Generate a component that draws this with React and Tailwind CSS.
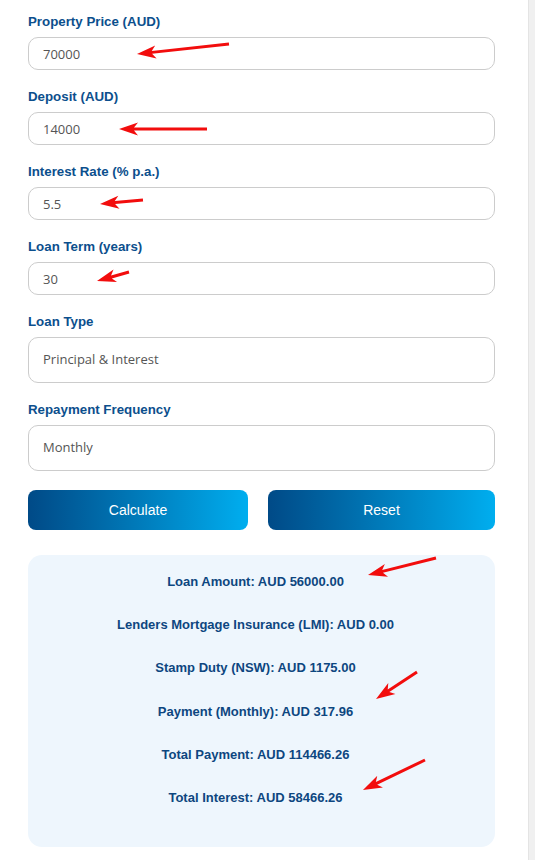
import React, { useState } from 'react';

// ─── Annotation arrows (red markers on top of the form) ─────────────────────

const ARROWS = [
  { from: [229, 44], to: [137, 54] },
  { from: [207, 129], to: [119, 129] },
  { from: [143, 200], to: [100, 204] },
  { from: [129, 272], to: [97, 281] },
  { from: [436, 558], to: [368, 575] },
  { from: [417, 672], to: [376, 699] },
  { from: [425, 760], to: [363, 790] },
];

function Arrow({ from, to }) {
  const [x1, y1] = from;
  const [x2, y2] = to;
  const len = Math.hypot(x2 - x1, y2 - y1);
  const ux = (x2 - x1) / len, uy = (y2 - y1) / len;
  const nx = -uy, ny = ux;
  const head = 19, hw = 6.5;
  const bx = x2 - ux * head, by = y2 - uy * head;
  const pts = [
    [x2, y2],
    [bx + nx * hw, by + ny * hw],
    [bx + ux * 4 + nx * 1.5, by + uy * 4 + ny * 1.5],
    [x1 + nx * 1.5, y1 + ny * 1.5],
    [x1 - nx * 1.5, y1 - ny * 1.5],
    [bx + ux * 4 - nx * 1.5, by + uy * 4 - ny * 1.5],
    [bx - nx * hw, by - ny * hw],
  ].map(p => p.join(',')).join(' ');
  return <polygon points={pts} fill="#f20d0d" />;
}

// ─── Form pieces ─────────────────────────────────────────────────────────────

function Field({ label, children }) {
  return (
    <div className="flex flex-col">
      <label className="text-[13.3px] leading-[18px] font-bold text-[#0c4f8d] mb-[6px]">{label}</label>
      {children}
    </div>
  );
}

const inputCls = 'w-full border border-[#cccccc] rounded-[10px] bg-white px-[14px] text-[13px] text-[#555] font-["Open_Sans",sans-serif] outline-none';

export default function App() {
  const [values, setValues] = useState({ price: '70000', deposit: '14000', rate: '5.5', term: '30' });
  const set = k => e => setValues(v => ({ ...v, [k]: e.target.value }));

  const results = [
    'Loan Amount: AUD 56000.00',
    'Lenders Mortgage Insurance (LMI): AUD 0.00',
    'Stamp Duty (NSW): AUD 1175.00',
    'Payment (Monthly): AUD 317.96',
    'Total Payment: AUD 114466.26',
    'Total Interest: AUD 58466.26',
  ];

  return (
    <div className="relative flex min-h-[860px] bg-white font-['Liberation_Sans',Arial,sans-serif]">
      <div className="flex-1 pl-[28px] pr-[33px] pt-[13px] pb-[13px]">
        <div className="flex flex-col gap-[18px]">
          <Field label="Property Price (AUD)">
            <input className={`${inputCls} h-[33px]`} value={values.price} onChange={set('price')} />
          </Field>
          <Field label="Deposit (AUD)">
            <input className={`${inputCls} h-[33px]`} value={values.deposit} onChange={set('deposit')} />
          </Field>
          <Field label="Interest Rate (% p.a.)">
            <input className={`${inputCls} h-[33px]`} value={values.rate} onChange={set('rate')} />
          </Field>
          <Field label="Loan Term (years)">
            <input className={`${inputCls} h-[33px]`} value={values.term} onChange={set('term')} />
          </Field>
          <Field label="Loan Type">
            <select className={`${inputCls} h-[46px] appearance-none`} defaultValue="pi">
              <option value="pi">Principal &amp; Interest</option>
              <option value="io">Interest Only</option>
            </select>
          </Field>
          <Field label="Repayment Frequency">
            <select className={`${inputCls} h-[46px] appearance-none`} defaultValue="monthly">
              <option value="monthly">Monthly</option>
              <option value="fortnightly">Fortnightly</option>
              <option value="weekly">Weekly</option>
            </select>
          </Field>
        </div>

        {/* Buttons */}
        <div className="grid grid-cols-[220px_1fr] gap-[20px] mt-[19px]">
          <button className="h-[40px] rounded-[8px] bg-gradient-to-r from-[#004a87] to-[#00aeef] text-white text-[14px]">Calculate</button>
          <button className="h-[40px] rounded-[8px] bg-gradient-to-r from-[#004a87] to-[#00aeef] text-white text-[14px]">Reset</button>
        </div>

        {/* Results */}
        <div className="mt-[25px] rounded-[14px] bg-[#eef6fd] pt-[19px] pb-[41px] pr-[12px] flex flex-col gap-[27.2px] items-center">
          {results.map(r => (
            <p key={r} className="text-[13px] leading-[16px] font-bold text-[#0d4680]">{r}</p>
          ))}
        </div>
      </div>

      {/* Scrollbar strip */}
      <div className="w-[7px] bg-[#f0f0f0] border-l border-[#e4e4e4]" />

      <svg className="absolute inset-0 pointer-events-none" width="535" height="860">
        {ARROWS.map((a, i) => <Arrow key={i} {...a} />)}
      </svg>
    </div>
  );
}
